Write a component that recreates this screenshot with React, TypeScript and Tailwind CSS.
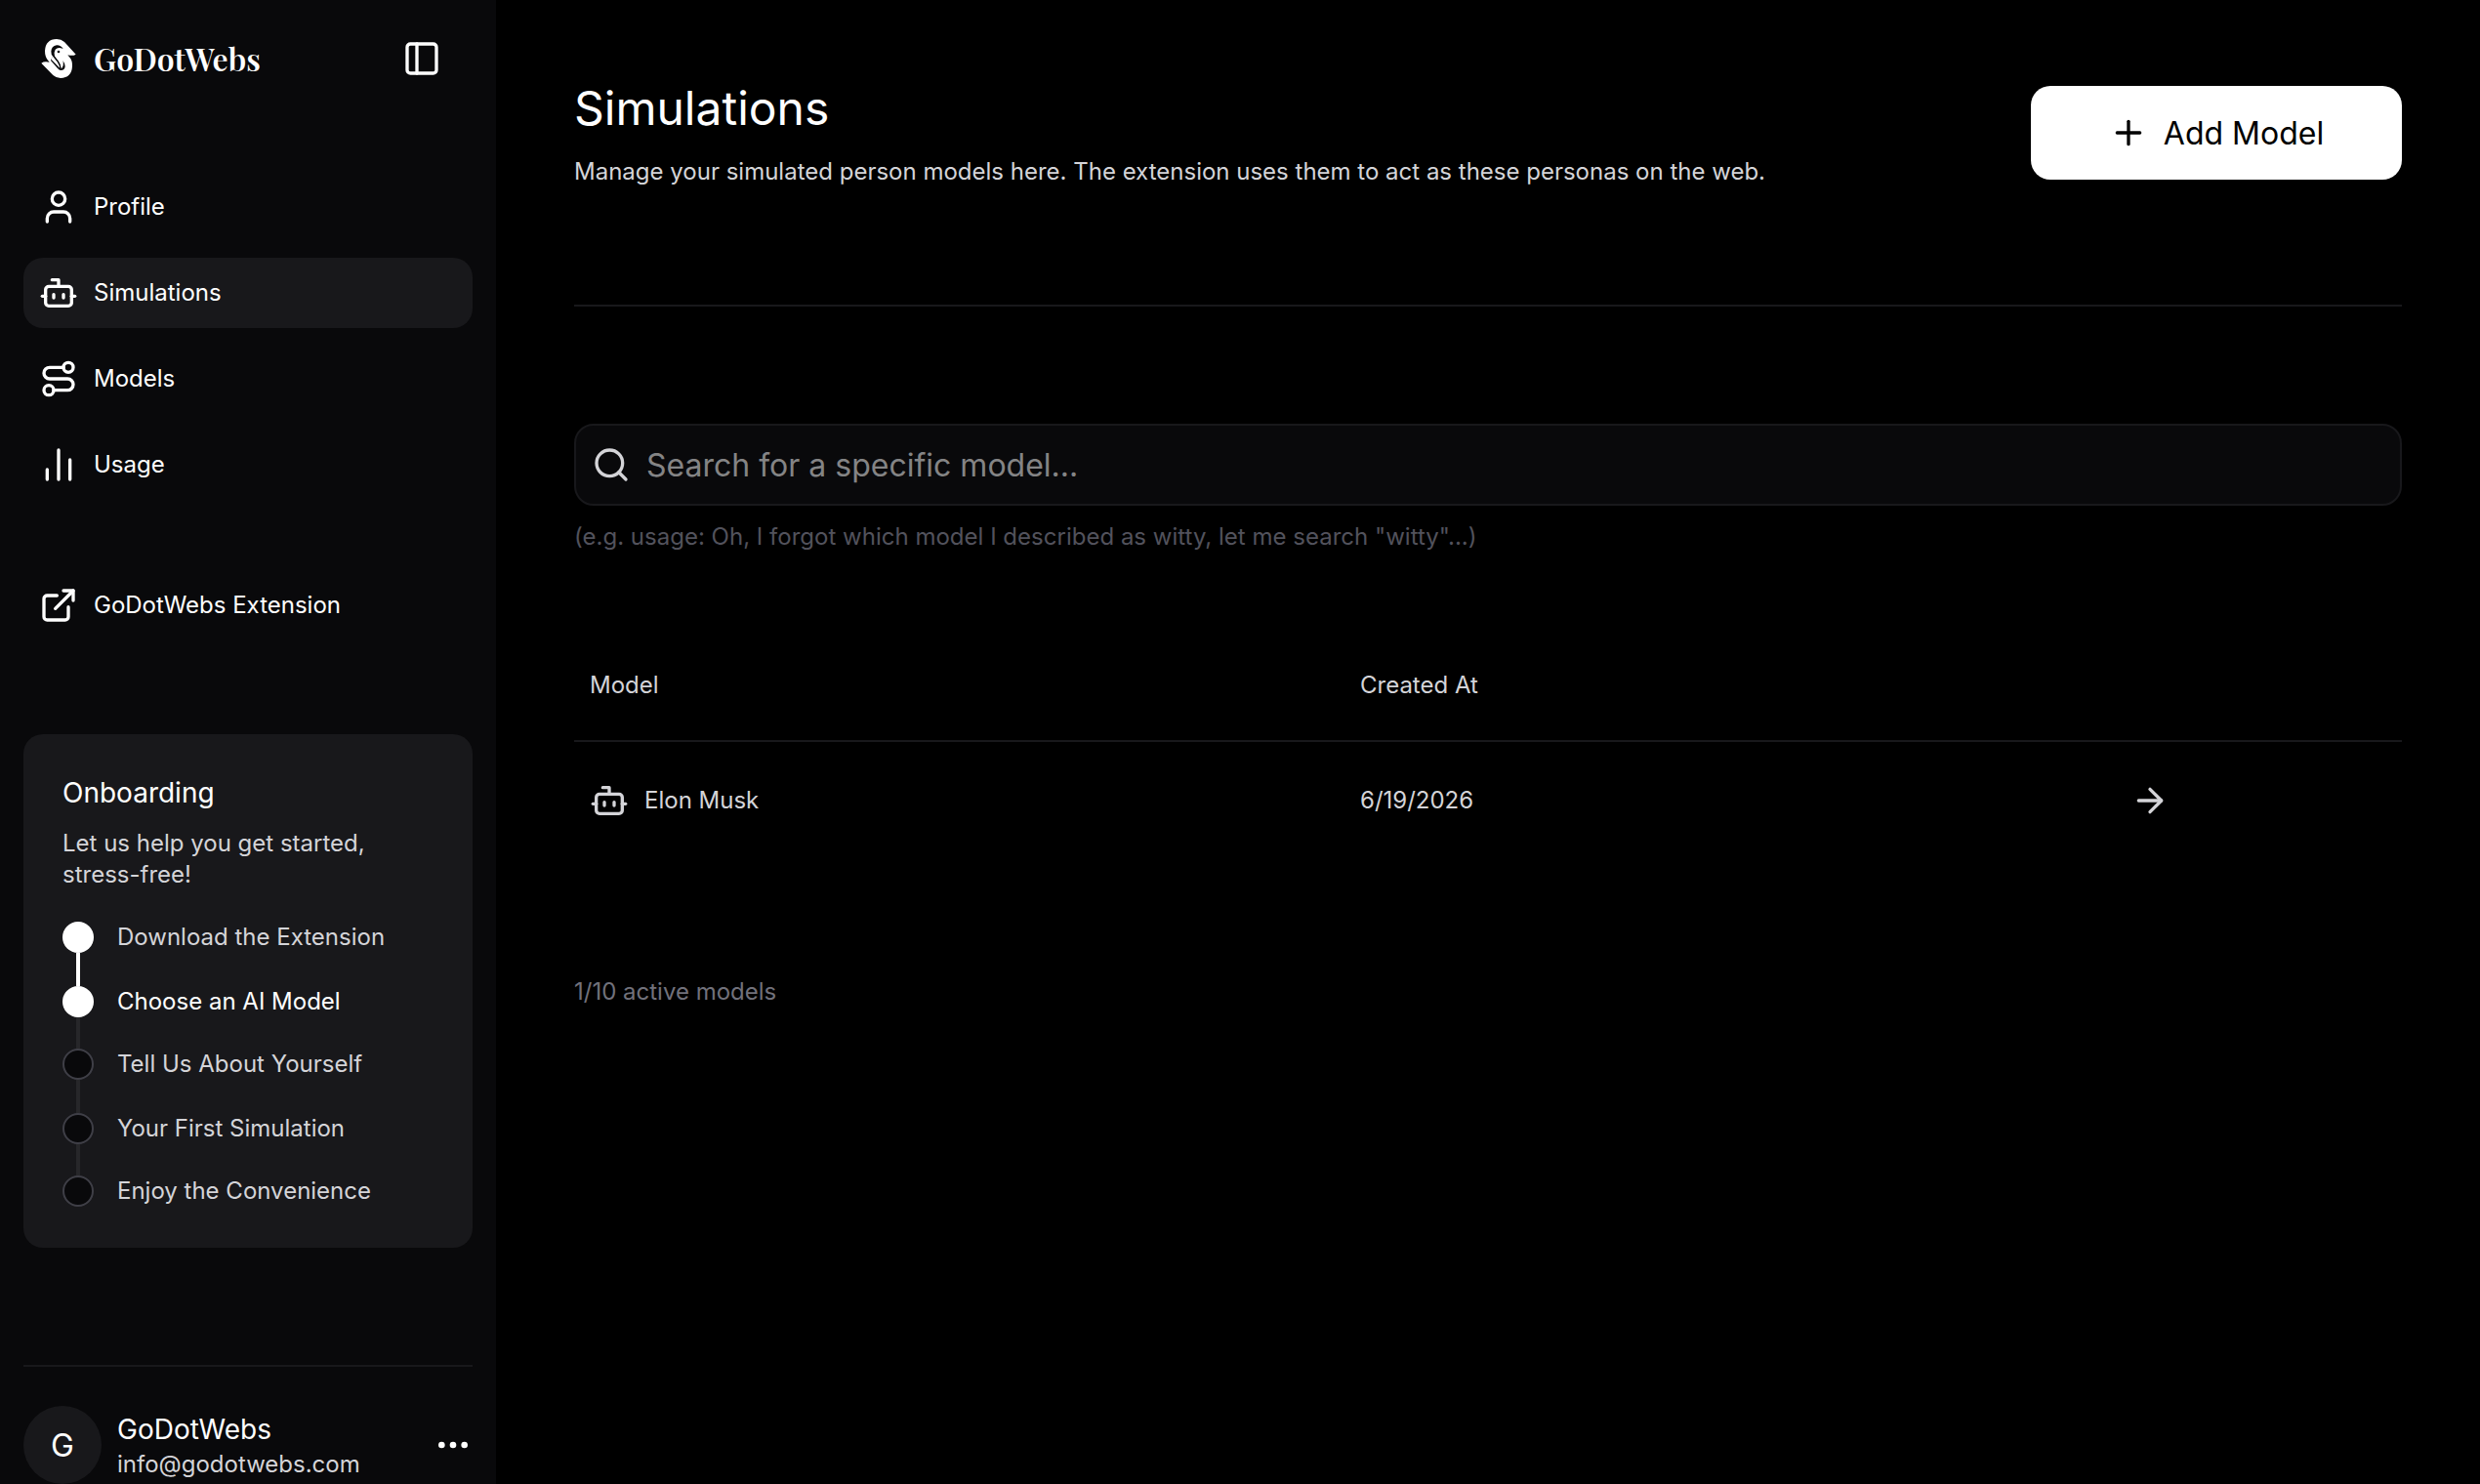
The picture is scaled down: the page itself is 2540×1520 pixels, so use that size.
import React from "react";
import {
  ArrowRight,
  Bot,
  ChartNoAxesColumn,
  Ellipsis,
  ExternalLink,
  PanelLeft,
  Plus,
  Route,
  Search,
  User,
} from "lucide-react";
import clsx from "clsx";

const navItems = [
  { label: "Profile", icon: User },
  { label: "Simulations", icon: Bot, active: true },
  { label: "Models", icon: Route },
  { label: "Usage", icon: ChartNoAxesColumn },
];

const steps = [
  { label: "Download the Extension", done: true, connector: "h-[34px] bg-white" },
  { label: "Choose an AI Model", done: true, current: true, connector: "h-8 bg-zinc-800" },
  { label: "Tell Us About Yourself", connector: "h-[34px] bg-zinc-800" },
  { label: "Your First Simulation", connector: "h-8 bg-zinc-800" },
  { label: "Enjoy the Convenience" },
];

const models = [{ id: "1", name: "Elon Musk", createdAt: "6/19/2026" }];

function Logo() {
  return (
    <svg width="40" height="40" viewBox="0 0 120 120" className="shrink-0">
      <path
        className="fill-white"
        d="M113 47 Q104 53 88 49 L94 56 Q103 66 102 84 Q100 119 66 120 Q53 120 43 111 L7 74 Q16 67 32 71 L26 64 Q18 54 18 36 Q20 1 54 0 Q68 0 78 9 Z"
      />
      {/* fold around the head, then the eye */}
      <path
        className="fill-zinc-950"
        d="M74 30 Q66 18 54 19 Q38 22 37 38 Q37 46 42 52 L36 66 L57 90 Q62 96 67 96 Q79 96 80 84 Q80 75 73 66 Q78 81 68 92 Q68 82 60 71 L48 54 Q44 42 50 32 Q58 23 74 30 Z M42 54 Z"
      />
      <path className="fill-white" d="M41 51 L56 69 Q66 82 65 91 L38 63 Z" />
      <path
        className="stroke-zinc-950"
        fill="none"
        strokeWidth="4"
        strokeLinecap="round"
        d="M40 46 L58 69 Q66 80 66 92"
      />
      <circle cx="60" cy="39" r="4" className="fill-zinc-950" />
    </svg>
  );
}

function NavItem({ label, icon: Icon, active = false }) {
  return (
    <a
      className={clsx(
        "flex h-[72px] items-center gap-4 rounded-[20px] px-4 text-2xl text-white",
        active && "bg-zinc-900"
      )}
    >
      <Icon size={40} />
      <span>{label}</span>
    </a>
  );
}

function Onboarding() {
  return (
    <section className="mt-24 h-[526px] rounded-[20px] bg-zinc-900 px-10 pt-10">
      <h2 className="text-[28px] leading-10 text-white">Onboarding</h2>
      <p className="mt-4 text-2xl leading-8 text-zinc-300">
        Let us help you get started, stress-free!
      </p>
      <ol className="mt-8">
        {steps.map((step) => (
          <li key={step.label}>
            <div className="flex h-8 items-center gap-6">
              <span
                className={clsx(
                  "size-8 shrink-0 rounded-full",
                  step.done ? "bg-white" : "border-2 border-zinc-700 bg-zinc-950"
                )}
              />
              <span
                className={clsx("text-2xl", step.current ? "text-white" : "text-zinc-300")}
              >
                {step.label}
              </span>
            </div>
            {step.connector && <div className={clsx("ml-3.5 w-1", step.connector)} />}
          </li>
        ))}
      </ol>
    </section>
  );
}

function Sidebar() {
  return (
    <aside className="flex w-[508px] shrink-0 flex-col bg-zinc-950 px-6 pt-10">
      {/* Brand */}
      <div className="flex h-10 items-center justify-between pl-4 pr-8">
        <div className="flex items-center gap-4">
          <Logo />
          <span className="font-['Playfair_Display','Liberation_Serif',serif] text-[32px] leading-10 font-semibold text-white">
            GoDotWebs
          </span>
        </div>
        <PanelLeft size={40} className="text-white" />
      </div>

      <nav className="mt-24 flex flex-col gap-4">
        {navItems.map((item) => (
          <NavItem key={item.label} {...item} />
        ))}
      </nav>
      <div className="mt-[72px]">
        <NavItem label="GoDotWebs Extension" icon={ExternalLink} />
      </div>

      <Onboarding />

      {/* Account */}
      <div className="mt-[120px] flex items-center border-t-2 border-zinc-900 pt-10">
        <div className="flex size-20 items-center justify-center rounded-full bg-zinc-900 pt-0.5 text-[32px] text-white">
          G
        </div>
        <div className="ml-4 flex-1">
          <p className="text-[28px] leading-10 text-white">GoDotWebs</p>
          <p className="text-2xl leading-8 text-zinc-300">info@godotwebs.com</p>
        </div>
        <Ellipsis size={40} className="text-white" />
      </div>
    </aside>
  );
}

export default function App() {
  return (
    <div className="flex h-[1520px] w-[2540px] overflow-hidden bg-black font-['Inter',sans-serif] text-zinc-300">
      <Sidebar />

      <main className="flex-1 px-20 pt-20">
        {/* Header */}
        <header className="flex h-[234px] items-start justify-between border-b-2 border-zinc-900">
          <div>
            <h1 className="text-5xl leading-[62px] text-white">Simulations</h1>
            <p className="mt-4 text-2xl leading-9">
              Manage your simulated person models here. The extension uses them to act as these
              personas on the web.
            </p>
          </div>
          <button className="mt-2 flex h-24 w-[380px] items-center justify-center gap-4 rounded-[20px] bg-white text-[32px] text-black">
            <Plus size={40} />
            <span className="pt-0.5">Add Model</span>
          </button>
        </header>

        {/* Search */}
        <div className="mt-[120px] flex h-[84px] items-center gap-4 rounded-[20px] border-2 border-zinc-900 bg-zinc-950 px-4">
          <Search size={40} />
          <input
            className="flex-1 bg-transparent pt-0.5 text-[32px] outline-none placeholder:text-[#848485]"
            placeholder="Search for a specific model..."
          />
        </div>
        <p className="mt-4 text-2xl leading-8 tracking-[0.01px] text-zinc-600">
          (e.g. usage: Oh, I forgot which model I described as witty, let me search "witty"...)
        </p>

        {/* Models */}
        <div className="mt-[78px] text-2xl">
          <div className="grid h-[116px] grid-cols-[789px_789px_1fr] items-center border-b-2 border-zinc-900 pt-0.5 pl-4">
            <span>Model</span>
            <span>Created At</span>
          </div>
          {models.map((model) => (
            <div
              key={model.id}
              className="grid h-[120px] grid-cols-[789px_789px_1fr] items-center pl-4"
            >
              <div className="flex items-center gap-4">
                <Bot size={40} />
                <span>{model.name}</span>
              </div>
              <span>{model.createdAt}</span>
              <ArrowRight size={40} />
            </div>
          ))}
        </div>

        <p className="mt-[120px] text-2xl leading-8 text-zinc-500">1/10 active models</p>
      </main>
    </div>
  );
}
